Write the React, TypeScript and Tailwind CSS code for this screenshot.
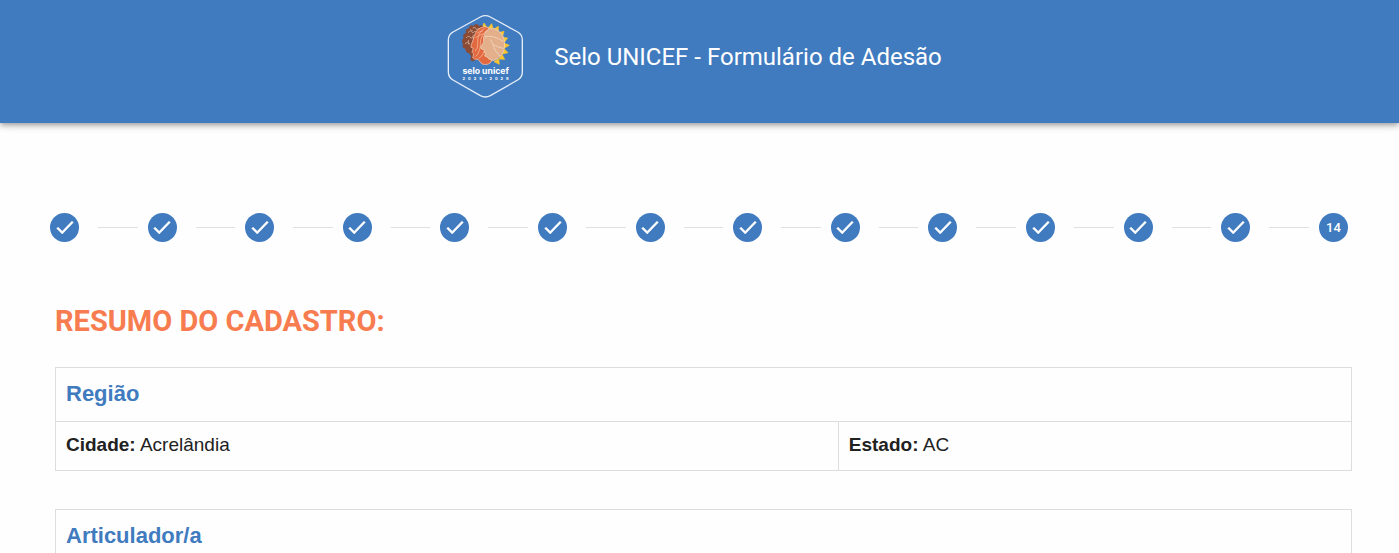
import type { ReactNode } from "react";

const TOTAL_STEPS = 14;

function SeloLogo() {
  return (
    <svg viewBox="0 0 270 285" className="h-[95px] w-[90px] shrink-0" role="img" aria-label="Selo UNICEF">
      <path
        d="M121 27 Q136 19 151 27 L233 72 Q247 80 247 96 V192 Q247 208 233 216 L151 263 Q136 271 121 263 L39 216 Q25 208 25 192 V96 Q25 80 39 72 Z"
        fill="none"
        stroke="#e6eef8"
        strokeWidth="4"
      />
      {/* raios */}
      <path
        d="M126 62 L132 45 L142 60 Z M144 60 L155 47 L160 64 Z M161 64 L175 55 L175 73 Z M175 74 L192 70 L187 88 Z M186 88 L203 90 L192 104 Z M191 105 L208 112 L192 121 Z M192 122 L204 134 L187 138 Z M186 139 L194 154 L177 153 Z M176 152 L178 169 L162 161 Z"
        fill="#fcc62c"
        stroke="#fcc62c"
        strokeWidth="2"
        strokeLinejoin="round"
      />
      {/* cabelo */}
      <path
        d="M118 54 Q108 42 101 54 Q88 48 87 61 Q74 62 78 75 Q65 79 71 90 Q62 98 69 108 Q64 120 76 122 Q76 134 87 135 L94 146 Q86 156 99 160 L118 150 L132 60 Q126 48 118 54 Z"
        fill="#8a4a33"
      />
      <path
        d="M84 74 q9 -11 14 1 q9 -10 14 0 M78 90 q9 -11 15 1 q6 -8 10 -1 M75 107 q9 -9 15 0 M98 60 q9 -6 12 5 q7 -7 14 0 M90 64 q4 5 8 3 M101 80 q-6 8 0 14 M86 96 q-4 8 1 14"
        fill="none"
        stroke="#c99a86"
        strokeWidth="3"
      />
      {/* rosto laranja */}
      <path
        d="M132 56 Q107 62 103 85 L93 113 Q90 119 100 121 L96 133 L101 138 L98 149 Q101 155 114 154 L126 168 Q147 174 155 159 L145 58 Z"
        fill="#e2693f"
        stroke="#f8cdb8"
        strokeWidth="2"
      />
      <path
        d="M134 61 Q112 74 113 104 Q115 123 105 130 M143 65 Q121 81 121 106 Q122 130 107 146 M111 76 Q119 70 129 68 M107 89 Q119 80 130 77 M116 151 Q127 145 131 134"
        fill="none"
        stroke="#f4b497"
        strokeWidth="2.4"
      />
      {/* rosto claro */}
      <path
        d="M150 60 Q178 62 190 86 Q199 113 187 138 Q175 154 160 158 Q145 155 141 147 L134 144 L137 136 L131 133 L134 126 Q119 123 122 117 L131 102 Q127 75 150 60 Z"
        fill="#e3b08b"
        stroke="#f3d8c2"
        strokeWidth="2"
      />
      <path
        d="M134 87 Q157 79 190 100 M152 95 Q155 114 190 121 M158 109 Q162 126 179 144"
        fill="none"
        stroke="#f3d8c2"
        strokeWidth="2.4"
      />
      <text x="137" y="199" textAnchor="middle" fill="#fff" fontSize="26" className="font-['Inter',sans-serif] font-bold">
        selo unicef
      </text>
      <text x="137" y="217" textAnchor="middle" fill="#fff" fontSize="12" className="font-['Inter',sans-serif] font-bold">
        {"2025-2028".split("").join("\u2002\u00a0")}
      </text>
    </svg>
  );
}

function CheckIcon() {
  return (
    <svg viewBox="0 0 24 24" className="size-[22px]" fill="currentColor" aria-hidden="true">
      <path d="M21 6 9 18.5l-6-6 1.41-1.41L9 15.67 19.59 4.59 21 6Z" stroke="currentColor" strokeWidth="0.6" />
    </svg>
  );
}

function Stepper({ current }: { current: number }) {
  const steps = Array.from({ length: TOTAL_STEPS }, (_, i) => i + 1);

  return (
    <ol className="mr-[51px] ml-[50px] mt-[90px] flex items-center">
      {steps.map((step) => (
        <li key={step} className={step < TOTAL_STEPS ? "flex flex-1 items-center" : "flex items-center"}>
          <span className="flex size-[29px] shrink-0 items-center justify-center rounded-full bg-[#407bbf] text-[13px] font-medium text-white">
            {step < current ? <CheckIcon /> : step}
          </span>
          {step < TOTAL_STEPS && <span className="mr-[10px] ml-[19px] h-px flex-1 bg-[#e0e0e0]" />}
        </li>
      ))}
    </ol>
  );
}

function Campo({ label, children }: { label: string; children: ReactNode }) {
  return (
    <td className="border border-[#dddddd] px-[10px] pt-[11px] pb-[13px] leading-6">
      <strong>{label}:</strong> {children}
    </td>
  );
}

function TabelaResumo({ titulo, children }: { titulo: string; children?: ReactNode }) {
  return (
    <table className="mb-[38px] w-full table-fixed border-collapse font-['Liberation_Sans',Arial,sans-serif] text-[19px] text-[#212121]">
      <colgroup>
        <col className="w-[60.4%]" />
        <col />
      </colgroup>
      <thead>
        <tr>
          <th
            colSpan={2}
            className="border border-[#dddddd] px-[10px] pt-[11px] pb-3 text-left text-[22px] leading-[30px] font-bold text-[#407bbf]"
          >
            {titulo}
          </th>
        </tr>
      </thead>
      {children && <tbody>{children}</tbody>}
    </table>
  );
}

export default function App() {
  return (
    <div className="h-screen overflow-hidden bg-[#fefefe] font-['Roboto',sans-serif]">
      <header className="flex items-center justify-center bg-[#407bbf] pt-2 pr-[17px] pb-5 shadow-[0_2px_4px_-1px_rgba(0,0,0,0.2),0_4px_5px_0_rgba(0,0,0,0.14),0_1px_10px_0_rgba(0,0,0,0.12)]">
        <SeloLogo />
        <h1 className="ml-6 pt-0.5 text-2xl text-white">Selo UNICEF - Formulário de Adesão</h1>
      </header>

      <main>
        <Stepper current={14} />

        <section className="mr-[47px] ml-[55px]">
          <h2 className="mt-[59px] mb-[26px] text-[29px] leading-10 font-bold text-[#f77c50]">
            RESUMO DO CADASTRO:
          </h2>

          <TabelaResumo titulo="Região">
            <tr>
              <Campo label="Cidade">Acrelândia</Campo>
              <Campo label="Estado">AC</Campo>
            </tr>
          </TabelaResumo>

          <TabelaResumo titulo="Articulador/a" />
        </section>
      </main>
    </div>
  );
}
